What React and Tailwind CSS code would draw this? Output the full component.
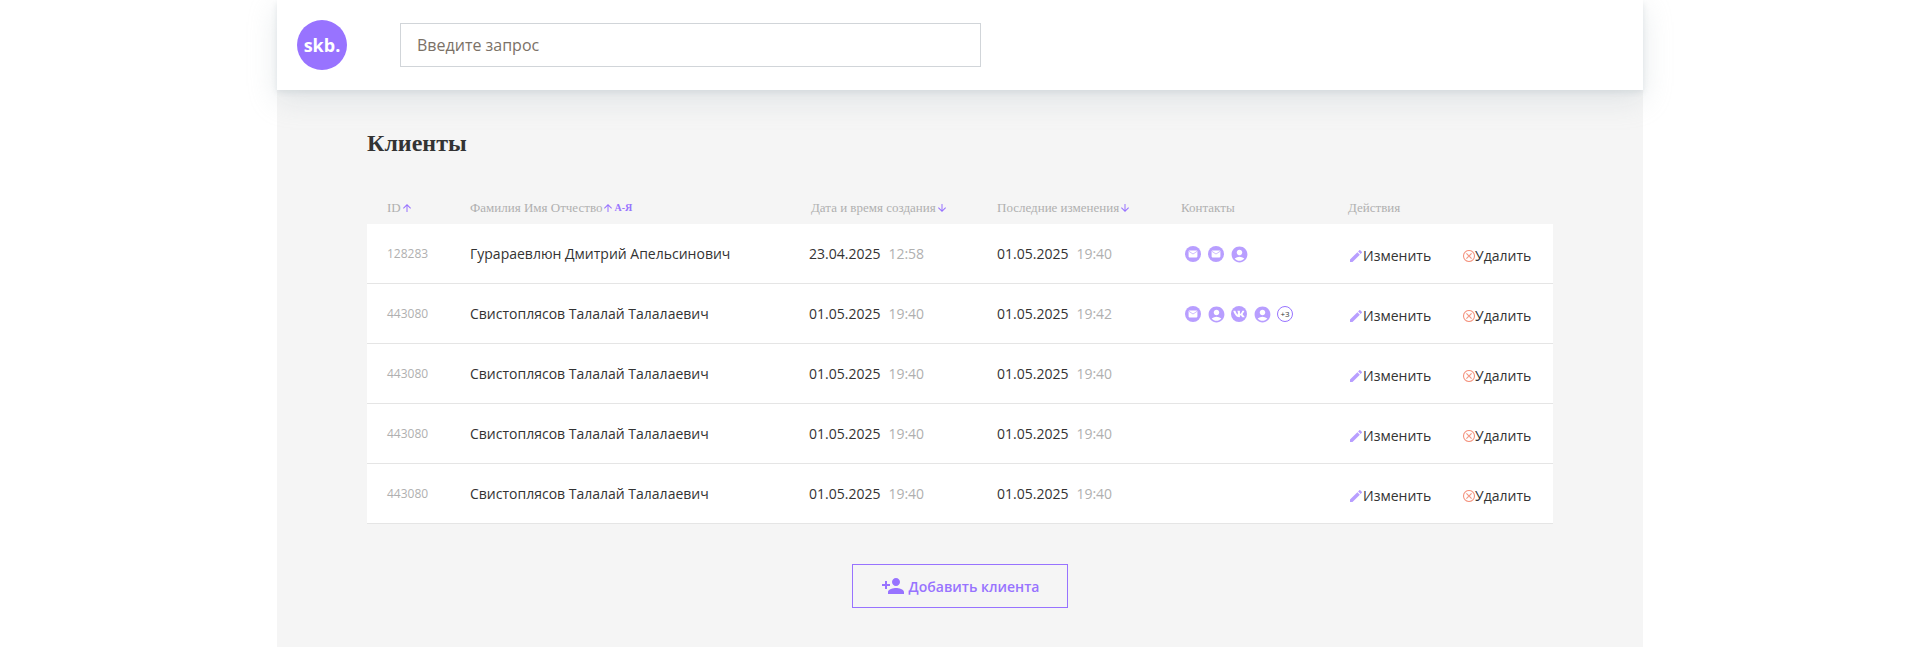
import React from 'react';
import { MdEdit, MdPersonAdd, MdAccountCircle, MdArrowUpward, MdArrowDownward } from 'react-icons/md';
import { FaVk } from 'react-icons/fa';

const MailIcon = () => (
  <svg width="16" height="16" viewBox="0 0 16 16" className="shrink-0">
    <circle cx="8" cy="8" r="8" fill="#B89EFF" />
    <rect x="3.6" y="4.6" width="8.8" height="6.8" rx="0.8" fill="#fff" />
    <path d="M4 5.4 8 8l4-2.6" fill="none" stroke="#B89EFF" strokeWidth="0.7" />
  </svg>
);

const UserIcon = () => <MdAccountCircle size={19} className="text-[#B89EFF] shrink-0 -m-[1.5px]" />;

const VkIcon = () => (
  <span className="w-4 h-4 rounded-full bg-[#B89EFF] flex items-center justify-center shrink-0">
    <FaVk size={12} className="text-white" />
  </span>
);

const MoreIcon = ({ count }) => (
  <span className="w-4 h-4 rounded-full border border-[#9873FF] flex items-center justify-center shrink-0 text-[8px] leading-none text-[#333]">
    {count}
  </span>
);

const contactIcons = { mail: MailIcon, user: UserIcon, vk: VkIcon };

const rows = [
  { id: '128283', name: 'Гурараевлюн Дмитрий Апельсинович', date: '23.04.2025', time: '12:58', upd: '01.05.2025', updTime: '19:40', contacts: ['mail', 'mail', 'user'] },
  { id: '443080', name: 'Свистоплясов Талалай Талалаевич', date: '01.05.2025', time: '19:40', upd: '01.05.2025', updTime: '19:42', contacts: ['mail', 'user', 'vk', 'user'], more: '+3' },
  { id: '443080', name: 'Свистоплясов Талалай Талалаевич', date: '01.05.2025', time: '19:40', upd: '01.05.2025', updTime: '19:40', contacts: [] },
  { id: '443080', name: 'Свистоплясов Талалай Талалаевич', date: '01.05.2025', time: '19:40', upd: '01.05.2025', updTime: '19:40', contacts: [] },
  { id: '443080', name: 'Свистоплясов Талалай Талалаевич', date: '01.05.2025', time: '19:40', upd: '01.05.2025', updTime: '19:40', contacts: [] },
];

const gridCols = 'grid grid-cols-[83px_339px_188px_187px_164px_114px_1fr] pl-5 items-center';

const App = () => {
  return (
    <div className="h-[647px] overflow-hidden bg-white font-['Open_Sans',sans-serif]">
      <div className="ml-[277px] w-[1366px] h-[647px] bg-[#F5F5F5]">
        {/* Header */}
        <header className="relative h-[90px] bg-white flex items-center pl-5 shadow-[0_3.4px_5.6px_rgba(176,190,197,0.32),0_9px_27px_rgba(176,190,197,0.32)]">
          <div className="w-[50px] h-[50px] rounded-full bg-[#9873FF] flex items-center justify-center text-white font-bold text-[18px] leading-none">
            skb.
          </div>
          <div className="ml-[53px] w-[581px] h-[44px] border border-[#D1D5D9] flex items-center pl-4 text-[16px] text-[#7B7167]">
            Введите запрос
          </div>
        </header>

        <main className="px-[90px]">
          <h1 className="pt-[39px] font-['Liberation_Serif',serif] font-bold text-[24px] leading-[28px] text-[#333]">Клиенты</h1>

          {/* Table head */}
          <div className={`${gridCols} mt-[35px] h-[32px] font-['Liberation_Serif',serif] text-[13px] leading-[16px] text-[#B0B0B0]`}>
            <div className="flex items-center">ID<MdArrowUpward size={12} className="text-[#9873FF]" /></div>
            <div className="flex items-center">
              Фамилия Имя Отчество<MdArrowUpward size={12} className="text-[#9873FF]" />
              <span className="text-[#9873FF] text-[10px] font-bold">А-Я</span>
            </div>
            <div className="flex items-center pl-[2px]">Дата и время создания<MdArrowDownward size={12} className="text-[#9873FF]" /></div>
            <div className="flex items-center">Последние изменения<MdArrowDownward size={12} className="text-[#9873FF]" /></div>
            <div className="-ml-[3px]">Контакты</div>
            <div>Действия</div>
          </div>

          {/* Rows */}
          <div className="bg-white">
            {rows.map((row, i) => (
              <div key={i} className={`${gridCols} h-[60px] border-b border-[#E5E5E5] text-[14px] text-[#333]`}>
                <div className="text-[12px] text-[#B0B0B0]">{row.id}</div>
                <div>{row.name}</div>
                <div>
                  {row.date}
                  <span className="ml-2 text-[#B0B0B0]">{row.time}</span>
                </div>
                <div>
                  {row.upd}
                  <span className="ml-2 text-[#B0B0B0]">{row.updTime}</span>
                </div>
                <div className="flex items-center gap-[7px] pt-px pl-px">
                  {row.contacts.map((c, j) => {
                    const Icon = contactIcons[c];
                    return <Icon key={j} />;
                  })}
                  {row.more && <MoreIcon count={row.more} />}
                </div>
                <div className="flex items-center pt-1 pl-px">
                  <MdEdit size={16} className="text-[#B89EFF] -ml-[1.5px] -mr-[1.5px]" />
                  <span className="ml-px">Изменить</span>
                </div>
                <div className="flex items-center pt-1 pl-px">
                  <svg width="12" height="12" viewBox="0 0 12 12" fill="none" stroke="#F06A4D" strokeOpacity="0.7" className="shrink-0">
                    <circle cx="6" cy="6" r="5.5" strokeWidth="1.1" />
                    <path d="M3.4 3.4l5.2 5.2M8.6 3.4 3.4 8.6" strokeWidth="1.1" />
                  </svg>
                  <span>Удалить</span>
                </div>
              </div>
            ))}
          </div>

          {/* Add button */}
          <div className="flex justify-center mt-10">
            <button className="w-[216px] h-[44px] border border-[#9873FF] flex items-center justify-center gap-1 text-[14px] font-semibold text-[#9873FF]">
              <MdPersonAdd size={24} />
              Добавить клиента
            </button>
          </div>
        </main>
      </div>
    </div>
  );
};

export default App;
